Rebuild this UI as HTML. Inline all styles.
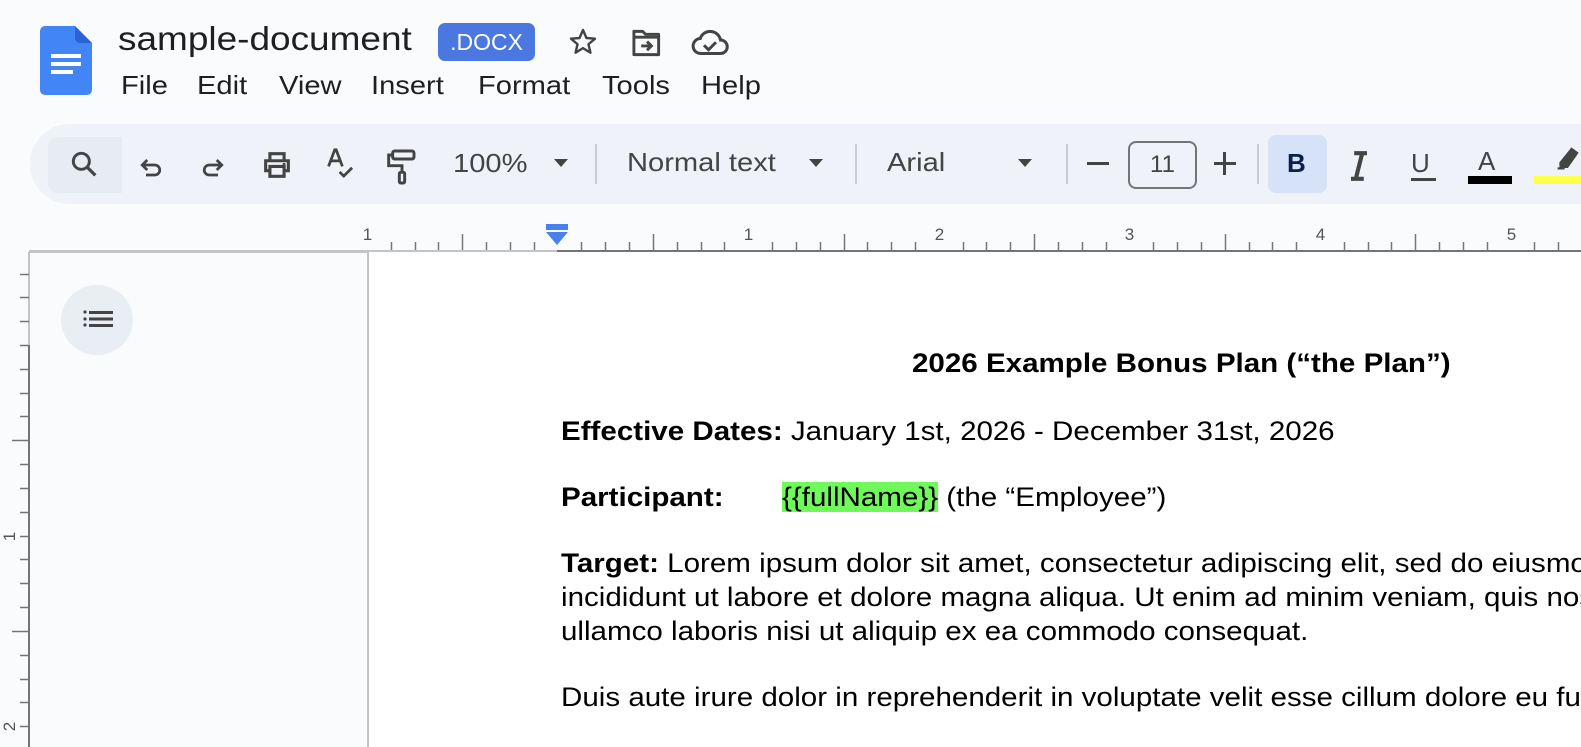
<!DOCTYPE html>
<html><head><meta charset="utf-8">
<style>
html,body{margin:0;padding:0;width:1581px;height:747px;overflow:hidden;background:#f9fbfd;font-family:"Liberation Sans",Arial,sans-serif;}
.a{position:absolute;white-space:nowrap;}
.t{transform:scaleX(1.12);transform-origin:0 50%;}
.menu{top:70px;font-size:26px;color:#1f1f1f;}
.tb{position:absolute;left:30px;top:124px;width:1551px;height:80px;background:#eff2f8;border-radius:40px 0 0 40px;}
.ic{position:absolute;}
.doc{font-size:26.5px;color:#000;line-height:34px;transform:scaleX(1.115);transform-origin:0 50%;}
b{font-weight:bold;}
#clip{position:absolute;left:0;top:0;width:1581px;height:747px;overflow:hidden;}
</style></head><body><div id="clip">
<svg class="ic" style="left:40px;top:26px" width="52" height="70" viewBox="0 0 52 70">
<path d="M5 0H35L52 17V64a5 5 0 0 1-5 5H5a5 5 0 0 1-5-5V5a5 5 0 0 1 5-5z" fill="#4285f4"/>
<path d="M35 0L52 17H40a5 5 0 0 1-5-5z" fill="#2a64d4"/>
<rect x="11" y="28" width="30" height="4" fill="#fff"/><rect x="11" y="36" width="30" height="4" fill="#fff"/><rect x="11" y="44" width="22" height="4" fill="#fff"/>
</svg>
<div class="a t" style="left:118px;top:20px;font-size:33px;color:#1f1f1f;">sample-document</div>
<div class="a" style="left:438px;top:23px;width:97px;height:38px;background:#4a78e0;border-radius:7px;color:#fff;font-size:23px;line-height:38px;text-align:center;">.DOCX</div>
<svg class="ic" style="left:566px;top:26px" width="34" height="32" viewBox="0 0 24 24"><path d="M12 3l2.6 6 6.4.5-4.9 4.2 1.5 6.3L12 16.6 6.4 20l1.5-6.3L3 9.5l6.4-.5z" fill="none" stroke="#444" stroke-width="1.8" stroke-linejoin="round"/></svg>
<svg class="ic" style="left:629px;top:27px" width="36" height="32" viewBox="0 0 24 22"><path d="M3 3h6l2 2h9v14H3z" fill="none" stroke="#444" stroke-width="2" stroke-linejoin="round"/><path d="M3 7h17" stroke="#444" stroke-width="2"/><path d="M8 13h7M12 10l3 3-3 3" fill="none" stroke="#444" stroke-width="2"/></svg>
<svg class="ic" style="left:690px;top:28px" width="40" height="30" viewBox="0 0 26 20"><path d="M7 17a5 5 0 0 1-.5-10A7 7 0 0 1 20 8a4.5 4.5 0 0 1 0 9z" fill="none" stroke="#444" stroke-width="2"/><path d="M9 11.5l3 3 5-5" fill="none" stroke="#444" stroke-width="2"/></svg>
<div class="a menu t" style="left:121px">File</div>
<div class="a menu t" style="left:197px">Edit</div>
<div class="a menu t" style="left:279px">View</div>
<div class="a menu t" style="left:371px">Insert</div>
<div class="a menu t" style="left:478px">Format</div>
<div class="a menu t" style="left:602px">Tools</div>
<div class="a menu t" style="left:701px">Help</div>

<div class="tb"></div>
<div class="a" style="left:48px;top:137px;width:74px;height:56px;background:#e7ebf2;border-radius:10px 0 0 10px;"></div>
<svg class="ic" style="left:68px;top:148px" width="32" height="32" viewBox="0 0 24 24"><circle cx="10" cy="10" r="6" fill="none" stroke="#444" stroke-width="2.2"/><path d="M14.5 14.5l6 6" stroke="#444" stroke-width="2.4"/></svg>
<svg class="ic" style="left:136px;top:150px" width="30" height="30" viewBox="0 0 24 24"><path d="M6 12h9a4 4 0 0 1 0 8H8M9 8l-4 4 4 4" fill="none" stroke="#444" stroke-width="2.2"/></svg>
<svg class="ic" style="left:198px;top:150px" width="30" height="30" viewBox="0 0 24 24"><path d="M18 12H9a4 4 0 0 0 0 8h7M15 8l4 4-4 4" fill="none" stroke="#444" stroke-width="2.2"/></svg>
<svg class="ic" style="left:260px;top:148px" width="34" height="34" viewBox="0 0 24 24"><path d="M7 8V4h10v4M7 16H4V9h16v7h-3M7 13h10v7H7z" fill="none" stroke="#444" stroke-width="2.2"/><circle cx="17" cy="11.5" r="1" fill="#444"/></svg>
<svg class="ic" style="left:324px;top:147px" width="34" height="36" viewBox="0 0 24 26"><path d="M3 14L7.5 2h1L13 14M5 10h7M11 18l3 3 6-6" fill="none" stroke="#444" stroke-width="2"/></svg>
<svg class="ic" style="left:386px;top:148px" width="32" height="38" viewBox="0 0 24 28"><rect x="5" y="2" width="16" height="6" rx="1.5" fill="none" stroke="#444" stroke-width="2.2"/><path d="M5 5H2v8h10v5" fill="none" stroke="#444" stroke-width="2.2"/><rect x="10" y="18" width="4" height="8" rx="1" fill="none" stroke="#444" stroke-width="2.2"/></svg>
<div class="a t" style="left:453px;top:148px;font-size:26px;color:#444;">100%</div>
<div class="a" style="left:554px;top:159px;border:7px solid transparent;border-top:8px solid #444;border-bottom:0;"></div>
<div class="a" style="left:595px;top:144px;width:2px;height:40px;background:#c9cdd2;"></div>
<div class="a t" style="left:627px;top:147px;font-size:26px;color:#444;">Normal text</div>
<div class="a" style="left:809px;top:159px;border:7px solid transparent;border-top:8px solid #444;border-bottom:0;"></div>
<div class="a" style="left:855px;top:144px;width:2px;height:40px;background:#c9cdd2;"></div>
<div class="a t" style="left:887px;top:147px;font-size:26px;color:#444;">Arial</div>
<div class="a" style="left:1018px;top:159px;border:7px solid transparent;border-top:8px solid #444;border-bottom:0;"></div>
<div class="a" style="left:1066px;top:144px;width:2px;height:40px;background:#c9cdd2;"></div>
<div class="a" style="left:1087px;top:162px;width:22px;height:3px;background:#444;"></div>
<div class="a" style="left:1128px;top:141px;width:65px;height:44px;border:2px solid #757575;border-radius:8px;font-size:24px;color:#444;text-align:center;line-height:44px;">11</div>
<div class="a" style="left:1214px;top:162px;width:22px;height:3px;background:#444;"></div>
<div class="a" style="left:1223px;top:152px;width:3px;height:23px;background:#444;"></div>
<div class="a" style="left:1257px;top:144px;width:2px;height:40px;background:#c9cdd2;"></div>
<div class="a" style="left:1268px;top:135px;width:59px;height:58px;background:#d5e2f8;border-radius:8px;"></div>
<div class="a" style="left:1287px;top:148px;font-size:26px;font-weight:bold;color:#0b1f4b;">B</div>
<svg class="ic" style="left:1346px;top:150px" width="26" height="32" viewBox="0 0 16 20"><path d="M5 2h8M3 18h8M10 2L6 18" stroke="#444" stroke-width="2.6" fill="none"/></svg>
<div class="a" style="left:1411px;top:148px;font-size:26px;color:#444;">U</div>
<div class="a" style="left:1411px;top:178px;width:25px;height:3px;background:#444;"></div>
<div class="a" style="left:1478px;top:146px;font-size:26px;color:#444;">A</div>
<div class="a" style="left:1468px;top:176px;width:44px;height:8px;background:#000;"></div>
<svg class="ic" style="left:1551px;top:146px" width="30" height="28" viewBox="0 0 20 20"><path d="M6 12l8-10 4 3-7 10H6zM4 16h5" fill="#444" stroke="#444" stroke-width="1.5"/></svg>
<div class="a" style="left:1534px;top:176px;width:47px;height:8px;background:#ffff4d;"></div>

<svg class="ic" style="left:0;top:0" width="1581" height="747" id="r"></svg>
<div class="a" style="left:369px;top:252px;width:1212px;height:495px;background:#fff;"></div>
<div class="a" style="left:61px;top:285px;width:72px;height:70px;border-radius:50%;background:#e9eef5;"></div>
<svg class="ic" style="left:83px;top:310px" width="32" height="20" viewBox="0 0 32 20"><circle cx="2" cy="2" r="1.6" fill="#444"/><circle cx="2" cy="9" r="1.6" fill="#444"/><circle cx="2" cy="15" r="1.6" fill="#444"/><rect x="6" y="1" width="24" height="3" fill="#444"/><rect x="6" y="7.5" width="24" height="3" fill="#444"/><rect x="6" y="14" width="24" height="3" fill="#444"/></svg>

<div class="a doc" style="left:912px;top:346px;font-weight:bold;">2026 Example Bonus Plan (“the Plan”)</div>
<div class="a doc" style="left:561px;top:414px;"><b>Effective Dates:</b> January 1st, 2026 - December 31st, 2026</div>
<div class="a doc" style="left:561px;top:480px;"><b>Participant:</b></div>
<div class="a doc" style="left:782px;top:480px;"><span style="background:#6ff95a">{{fullName}}</span> (the “Employee”)</div>
<div class="a doc" style="left:561px;top:546px;"><b>Target:</b> Lorem ipsum dolor sit amet, consectetur adipiscing elit, sed do eiusmod</div>
<div class="a doc" style="left:561px;top:580px;">incididunt ut labore et dolore magna aliqua. Ut enim ad minim veniam, quis nos</div>
<div class="a doc" style="left:561px;top:614px;">ullamco laboris nisi ut aliquip ex ea commodo consequat.</div>
<div class="a doc" style="left:561px;top:680px;">Duis aute irure dolor in reprehenderit in voluptate velit esse cillum dolore eu fugiat</div>
</div>
<script>
var s='',g='#757575',inch=190.6,st=inch/8;
s+='<line x1="29" y1="251" x2="557" y2="251" stroke="#c4c4c4" stroke-width="2"/>';
s+='<line x1="557" y1="251" x2="1581" y2="251" stroke="'+g+'" stroke-width="2"/>';
for(var k=0;k<60;k++){var x=Math.round(367+k*st)+.5;if(x>1581)break;var m=k%8;
 if(m==0){ if(k!=8){var n=k==0?1:k/8-1;s+='<text x="'+x+'" y="240" font-size="17" fill="#555" text-anchor="middle" font-family="Liberation Sans">'+n+'</text>';}}
 else s+='<line x1="'+x+'" x2="'+x+'" y1="'+(m==4?234:242)+'" y2="250" stroke="'+g+'" stroke-width="1.5"/>';}
s+='<line x1="29" y1="252" x2="369" y2="252" stroke="#c4c4c4" stroke-width="2"/>';
s+='<line x1="368" y1="252" x2="368" y2="747" stroke="#c4c4c4" stroke-width="2"/>';
s+='<line x1="29" y1="252" x2="29" y2="345" stroke="#c4c4c4" stroke-width="2"/>';
s+='<line x1="29" y1="345" x2="29" y2="747" stroke="'+g+'" stroke-width="2"/>';
for(var k=-4;k<20;k++){var y=Math.round(345+k*st)+.5;if(y<262||y>747)continue;var m=((k%8)+8)%8;
 if(m==0&&k>0){s+='<text x="0" y="0" font-size="17" fill="#555" text-anchor="middle" font-family="Liberation Sans" transform="translate(15,'+y+') rotate(-90)">'+(k/8)+'</text><line x1="20" x2="29" y1="'+y+'" y2="'+y+'" stroke="'+g+'" stroke-width="1.5"/>';}
 else s+='<line x1="'+(m==4?12:20)+'" x2="29" y1="'+y+'" y2="'+y+'" stroke="'+g+'" stroke-width="1.5"/>';}
s+='<rect x="546" y="224" width="22" height="6" fill="#4a7ff0"/><path d="M546 232h22l-11 13z" fill="#4a7ff0"/>';
document.getElementById('r').innerHTML=s;
</script>
</body></html>
